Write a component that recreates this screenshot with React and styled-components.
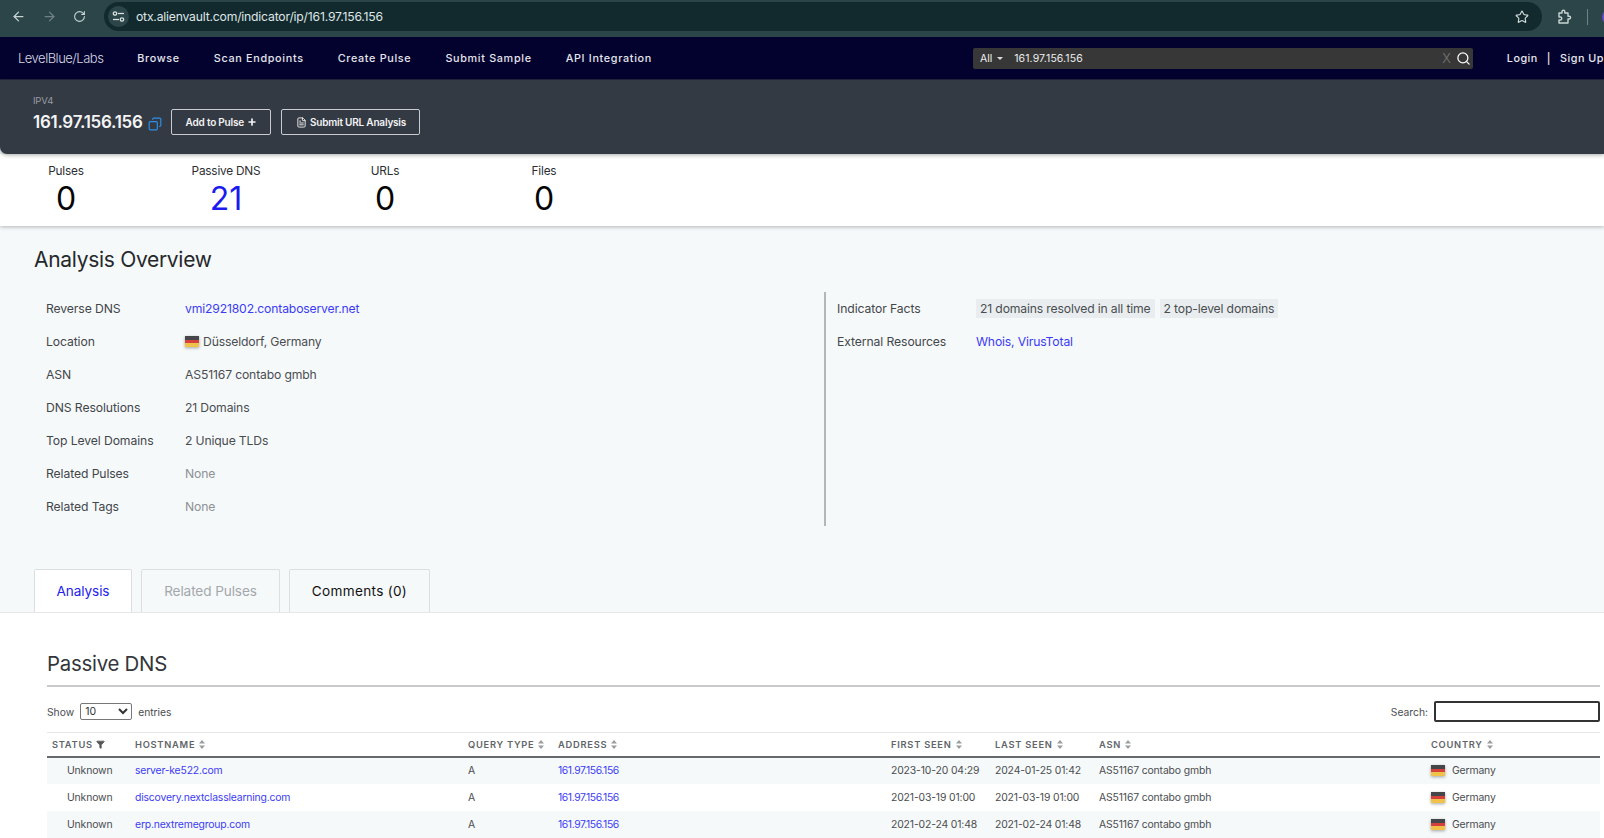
import React from "react";
import styled, { createGlobalStyle } from "styled-components";
import { ArrowLeft, ArrowRight, RotateCw, Star, Search, Plus, FileText, Copy, Filter } from "lucide-react";

const Global = createGlobalStyle`
  html, body { margin: 0; padding: 0; }
  body { width: 1604px; height: 838px; overflow: hidden; background: #f6f9fa; font-family: Inter, "Liberation Sans", sans-serif; color: #3f4246; }
  * { box-sizing: border-box; }
`;
const Page = styled.div`width:1604px;height:838px;overflow:hidden;display:flex;flex-direction:column;`;

const Chrome = styled.div`height:37px;flex:none;background:#2b4548;display:flex;align-items:center;padding:0 0 4px 11px;color:#cfd8d8;overflow:hidden;`;
const ChromeBtn = styled.span`width:31px;flex:none;display:flex;align-items:center;color:${p=>p.$dim?"#6f8385":"#c9d3d3"};`;
const UrlPill = styled.div`width:1438px;height:29px;flex:none;border-radius:15px;background:#122a2e;display:flex;align-items:center;padding:0 13px 0 4px;`;
const SiteIcon = styled.span`width:21px;height:21px;border-radius:50%;background:#2b4548;display:flex;align-items:center;justify-content:center;margin-right:7px;color:#d8e0e0;`;
const UrlText = styled.span`font-size:12.2px;color:#dfe6e6;letter-spacing:-.2px;flex:1;`;
const Ext = styled.span`margin-left:15px;flex:none;display:flex;color:#c9d3d3;`;
const Separator = styled.span`width:1px;height:16px;background:#6f8385;margin-left:15px;flex:none;`;
const Avatar = styled.span`width:16px;height:16px;border-radius:50%;background:#6a4bc4;margin-left:14px;flex:none;`;

const Nav = styled.nav`height:43px;flex:none;background:#03022e;display:flex;align-items:center;border-bottom:1px solid #23273f;color:#e8e8ee;`;
const Logo = styled.span`margin-left:18px;width:120px;font-size:13px;letter-spacing:-.5px;color:#d6d8e2;font-weight:300;`;
const NavLinks = styled.div`display:flex;gap:34px;width:841px;`;
const NavLink = styled.span`font-size:10.8px;font-weight:500;letter-spacing:.68px;color:#e4e5ec;white-space:nowrap;`;
const SearchBar = styled.div`width:503px;height:21px;background:#373737;border-radius:2px;display:flex;align-items:center;padding:0 2px 0 7px;font-size:10.5px;color:#eee;`;
const Caret = styled.span`width:0;height:0;margin:0 0 0 5px;border:3px solid transparent;border-top-color:#ddd;border-bottom:0;`;
const SearchValue = styled.span`margin-left:11px;flex:1;letter-spacing:.1px;`;
const ClearX = styled.span`color:#777;font-size:13px;font-weight:300;margin-right:5px;`;
const NavRight = styled.div`margin-left:34px;display:flex;font-size:10.8px;font-weight:500;letter-spacing:.5px;white-space:nowrap;gap:9px;`;

const Header = styled.header`height:74px;flex:none;background:#343a44;border-radius:0 0 0 7px;box-shadow:0 1px 4px rgba(0,0,0,.35);padding:15px 0 0 33px;position:relative;z-index:2;`;
const Kicker = styled.div`font-size:9.5px;color:#989ca3;line-height:12px;letter-spacing:-.2px;`;
const HeaderRow = styled.div`display:flex;align-items:center;margin-top:2px;`;
const Ip = styled.span`font-size:17px;font-weight:600;color:#f3f4f5;letter-spacing:-.28px;`;
const CopyIcon = styled.span`display:flex;color:#2c8fe8;margin:3px 9px 0 5px;transform:scaleX(-1);`;
const HeaderBtn = styled.button`height:26px;border:1px solid #c9cbce;border-radius:2px;background:transparent;color:#f2f2f2;font:600 10px Inter,sans-serif;letter-spacing:-.2px;display:flex;align-items:center;gap:3px;padding:0 13px 0 14px;margin-right:10px;`;

const Stats = styled.section`height:72px;flex:none;background:#fff;box-shadow:0 1px 4px rgba(0,0,0,.28);display:flex;position:relative;z-index:1;`;
const Stat = styled.div`width:${p=>p.$w}px;margin-left:${p=>p.$l||0}px;text-align:center;padding-top:10px;`;
const StatLabel = styled.div`font-size:11.8px;line-height:15px;color:#2d2f33;letter-spacing:-.2px;white-space:nowrap;`;
const StatValue = styled.div`font-size:32px;line-height:36px;margin-top:2px;color:${p=>p.$link?"#1b1bf0":"#050505"};font-weight:400;`;

const Overview = styled.section`height:344px;flex:none;padding:21px 0 0 34px;`;
const H2 = styled.h2`font-size:21px;line-height:26px;font-weight:400;color:#25282b;margin:0;letter-spacing:-.3px;`;
const Columns = styled.div`display:flex;margin-top:19px;`;
const Column = styled.div`width:${p=>p.$w}px;height:234px;padding:0 0 0 ${p=>p.$pl}px;${p=>p.$rule?"border-left:2px solid #b4b6b8;":""}`;
const Row = styled.div`display:flex;align-items:center;height:33px;font-size:12.2px;letter-spacing:-.16px;`;
const Label = styled.span`width:${p=>p.$w}px;flex:none;color:#43464a;white-space:nowrap;letter-spacing:-.1px;`;
const Value = styled.span`display:flex;align-items:center;gap:4px;color:${p=>p.$muted?"#8d9195":"#4a4d50"};white-space:nowrap;`;
const A = styled.a`color:#3b3bf5;white-space:nowrap;`;
const Flag = styled.span`display:inline-block;width:14px;height:11px;background:linear-gradient(#45464a 0 33%,#d6403a 33% 66%,#f0c24a 66%);box-shadow:0 1px 3px rgba(0,0,0,.35);flex:none;`;
const Chip = styled.span`background:#e9edef;padding:2px 4px;margin-right:1px;color:#4a4d50;`;

const Tabs = styled.div`height:43px;flex:none;display:flex;align-items:flex-end;gap:9px;padding-left:34px;border-bottom:1px solid #e4e6e8;`;
const Tab = styled.div`height:43px;width:${p=>p.$w}px;display:flex;align-items:center;justify-content:center;font-size:13.6px;border:1px solid #dcdfe1;border-bottom:0;border-radius:2px 2px 0 0;letter-spacing:${p=>p.$ls||-.1}px;
  background:${p=>p.$active?"#fff":"transparent"};color:${p=>p.$c};`;

const Content = styled.main`flex:1;background:#fff;padding:38px 4px 0 47px;min-height:0;`;
const H3 = styled.h3`font-size:20.4px;line-height:26px;font-weight:400;color:#33363a;margin:0;padding-bottom:8px;border-bottom:2px solid #c8c9cb;letter-spacing:-.25px;`;
const Controls = styled.div`display:flex;justify-content:space-between;align-items:center;height:45px;padding-top:4px;font-size:10.3px;color:#4a4d50;`;
const Inline = styled.div`display:flex;align-items:center;gap:6px;`;
const FakeSelect = styled.select`width:52px;height:17px;font:10.5px Inter,sans-serif;border:1px solid #777;border-radius:2px;background:#fff;color:#333;`;
const SearchBox = styled.input`width:166px;height:21px;border:2px solid #333;border-radius:2px;background:#fff;`;

const Table = styled.table`width:100%;table-layout:fixed;border-collapse:collapse;font-size:10.4px;border-top:1px solid #e6e7e8;`;
const Th = styled.th`width:${p=>p.$w}px;height:24px;text-align:left;font-weight:600;font-size:9.3px;letter-spacing:.75px;color:#616468;border-bottom:2px solid #66696d;padding:0 0 0 ${p=>p.$pl||0}px;white-space:nowrap;`;
const Sort = styled.span`display:inline-flex;vertical-align:-1px;margin-left:4px;color:#9a9da0;`;
const FilterMark = styled.span`display:inline-flex;vertical-align:-1px;`;
const Tr = styled.tr`height:27px;background:${p=>p.$odd?"#f6f9fa":"#fff"};`;
const Td = styled.td`padding:0 0 0 ${p=>p.$pl||0}px;color:#4a4d50;white-space:nowrap;letter-spacing:-.14px;`;
const TdLink = styled.a`color:#3b3bf5;letter-spacing:${p=>p.$tight?-.4:-.18}px;`;
const Country = styled.span`display:flex;align-items:center;gap:7px;`;

const rows = [
  ["server-ke522.com","2023-10-20 04:29","2024-01-25 01:42"],
  ["discovery.nextclasslearning.com","2021-03-19 01:00","2021-03-19 01:00"],
  ["erp.nextremegroup.com","2021-02-24 01:48","2021-02-24 01:48"],
];
const S = () => <Sort><svg width="6" height="9" viewBox="0 0 6 9" fill="currentColor"><path d="M3 0 6 3.6H0zM3 9 0 5.4h6z"/></svg></Sort>;
const Tune = () => <svg width="13" height="13" viewBox="0 0 13 13" fill="none" stroke="currentColor" strokeWidth="1.3"><circle cx="3" cy="3.5" r="1.7"/><path d="M6 3.5h6"/><circle cx="10" cy="9.5" r="1.7"/><path d="M1 9.5h6"/></svg>;
const Ext2 = () => <svg width="15" height="16" viewBox="0 0 15 16" fill="none" stroke="currentColor" strokeWidth="1.4" strokeLinejoin="round"><path d="M2 4h3V2.6a1.4 1.4 0 0 1 2.8 0V4H11v3.2h1.2a1.4 1.4 0 0 1 0 2.8H11v4H2v-3h1.3a1.5 1.5 0 0 0 0-3H2z"/></svg>;

export default function App(){
  return <Page><Global/>
    <Chrome>
      <ChromeBtn><ArrowLeft size={15}/></ChromeBtn>
      <ChromeBtn $dim><ArrowRight size={15}/></ChromeBtn>
      <ChromeBtn><RotateCw size={13}/></ChromeBtn>
      <UrlPill>
        <SiteIcon><Tune/></SiteIcon>
        <UrlText>otx.alienvault.com/indicator/ip/161.97.156.156</UrlText>
        <Star size={14}/>
      </UrlPill>
      <Ext><Ext2/></Ext>
      <Separator/>
      <Avatar/>
    </Chrome>
    <Nav>
      <Logo>LevelBlue/Labs</Logo>
      <NavLinks>
        <NavLink>Browse</NavLink><NavLink>Scan Endpoints</NavLink><NavLink>Create Pulse</NavLink><NavLink>Submit Sample</NavLink><NavLink>API Integration</NavLink>
      </NavLinks>
      <SearchBar>All<Caret/><SearchValue>161.97.156.156</SearchValue><ClearX>X</ClearX><Search size={15} color="#fff"/></SearchBar>
      <NavRight><span>Login</span><span>|</span><span>Sign Up</span></NavRight>
    </Nav>
    <Header>
      <Kicker>IPV4</Kicker>
      <HeaderRow>
        <Ip>161.97.156.156</Ip>
        <CopyIcon><Copy size={14}/></CopyIcon>
        <HeaderBtn>Add to Pulse <Plus size={10} strokeWidth={4}/></HeaderBtn>
        <HeaderBtn><FileText size={11}/>Submit URL Analysis</HeaderBtn>
      </HeaderRow>
    </Header>
    <Stats>
      <Stat $w={60} $l={36}><StatLabel>Pulses</StatLabel><StatValue>0</StatValue></Stat>
      <Stat $w={80} $l={90}><StatLabel>Passive DNS</StatLabel><StatValue $link>21</StatValue></Stat>
      <Stat $w={60} $l={89}><StatLabel>URLs</StatLabel><StatValue>0</StatValue></Stat>
      <Stat $w={60} $l={99}><StatLabel>Files</StatLabel><StatValue>0</StatValue></Stat>
    </Stats>
    <Overview>
      <H2>Analysis Overview</H2>
      <Columns>
        <Column $w={790} $pl={12}>
          <Row><Label $w={139}>Reverse DNS</Label><Value><A>vmi2921802.contaboserver.net</A></Value></Row>
          <Row><Label $w={139}>Location</Label><Value><Flag/>Düsseldorf, Germany</Value></Row>
          <Row><Label $w={139}>ASN</Label><Value>AS51167 contabo gmbh</Value></Row>
          <Row><Label $w={139}>DNS Resolutions</Label><Value>21 Domains</Value></Row>
          <Row><Label $w={139}>Top Level Domains</Label><Value>2 Unique TLDs</Value></Row>
          <Row><Label $w={139}>Related Pulses</Label><Value $muted>None</Value></Row>
          <Row><Label $w={139}>Related Tags</Label><Value $muted>None</Value></Row>
        </Column>
        <Column $w={700} $pl={11} $rule>
          <Row><Label $w={139}>Indicator Facts</Label><Value><Chip>21 domains resolved in all time</Chip><Chip>2 top-level domains</Chip></Value></Row>
          <Row><Label $w={139}>External Resources</Label><Value><A>Whois, VirusTotal</A></Value></Row>
        </Column>
      </Columns>
    </Overview>
    <Tabs>
      <Tab $active $w={98} $c="#2222ee">Analysis</Tab>
      <Tab $w={139} $c="#a4a7aa">Related Pulses</Tab>
      <Tab $w={141} $ls={0.3} $c="#111">Comments (0)</Tab>
    </Tabs>
    <Content>
      <H3>Passive DNS</H3>
      <Controls>
        <Inline>Show <FakeSelect defaultValue="10"><option>10</option></FakeSelect> entries</Inline>
        <Inline>Search: <SearchBox/></Inline>
      </Controls>
      <Table>
        <thead><tr>
          <Th $w={88} $pl={5}>STATUS <FilterMark><Filter size={9} fill="#555" color="#555"/></FilterMark></Th>
          <Th $w={333}>HOSTNAME<S/></Th>
          <Th $w={90}>QUERY TYPE<S/></Th>
          <Th $w={333}>ADDRESS<S/></Th>
          <Th $w={104}>FIRST SEEN<S/></Th>
          <Th $w={104}>LAST SEEN<S/></Th>
          <Th $w={332}>ASN<S/></Th>
          <Th>COUNTRY<S/></Th>
        </tr></thead>
        <tbody>
          {rows.map((r,i)=><Tr key={r[0]} $odd={i%2===0}>
            <Td $pl={20}>Unknown</Td>
            <Td><TdLink>{r[0]}</TdLink></Td>
            <Td>A</Td>
            <Td><TdLink $tight>161.97.156.156</TdLink></Td>
            <Td>{r[1]}</Td>
            <Td>{r[2]}</Td>
            <Td>AS51167 contabo gmbh</Td>
            <Td><Country><Flag/>Germany</Country></Td>
          </Tr>)}
        </tbody>
      </Table>
    </Content>
  </Page>;
}
